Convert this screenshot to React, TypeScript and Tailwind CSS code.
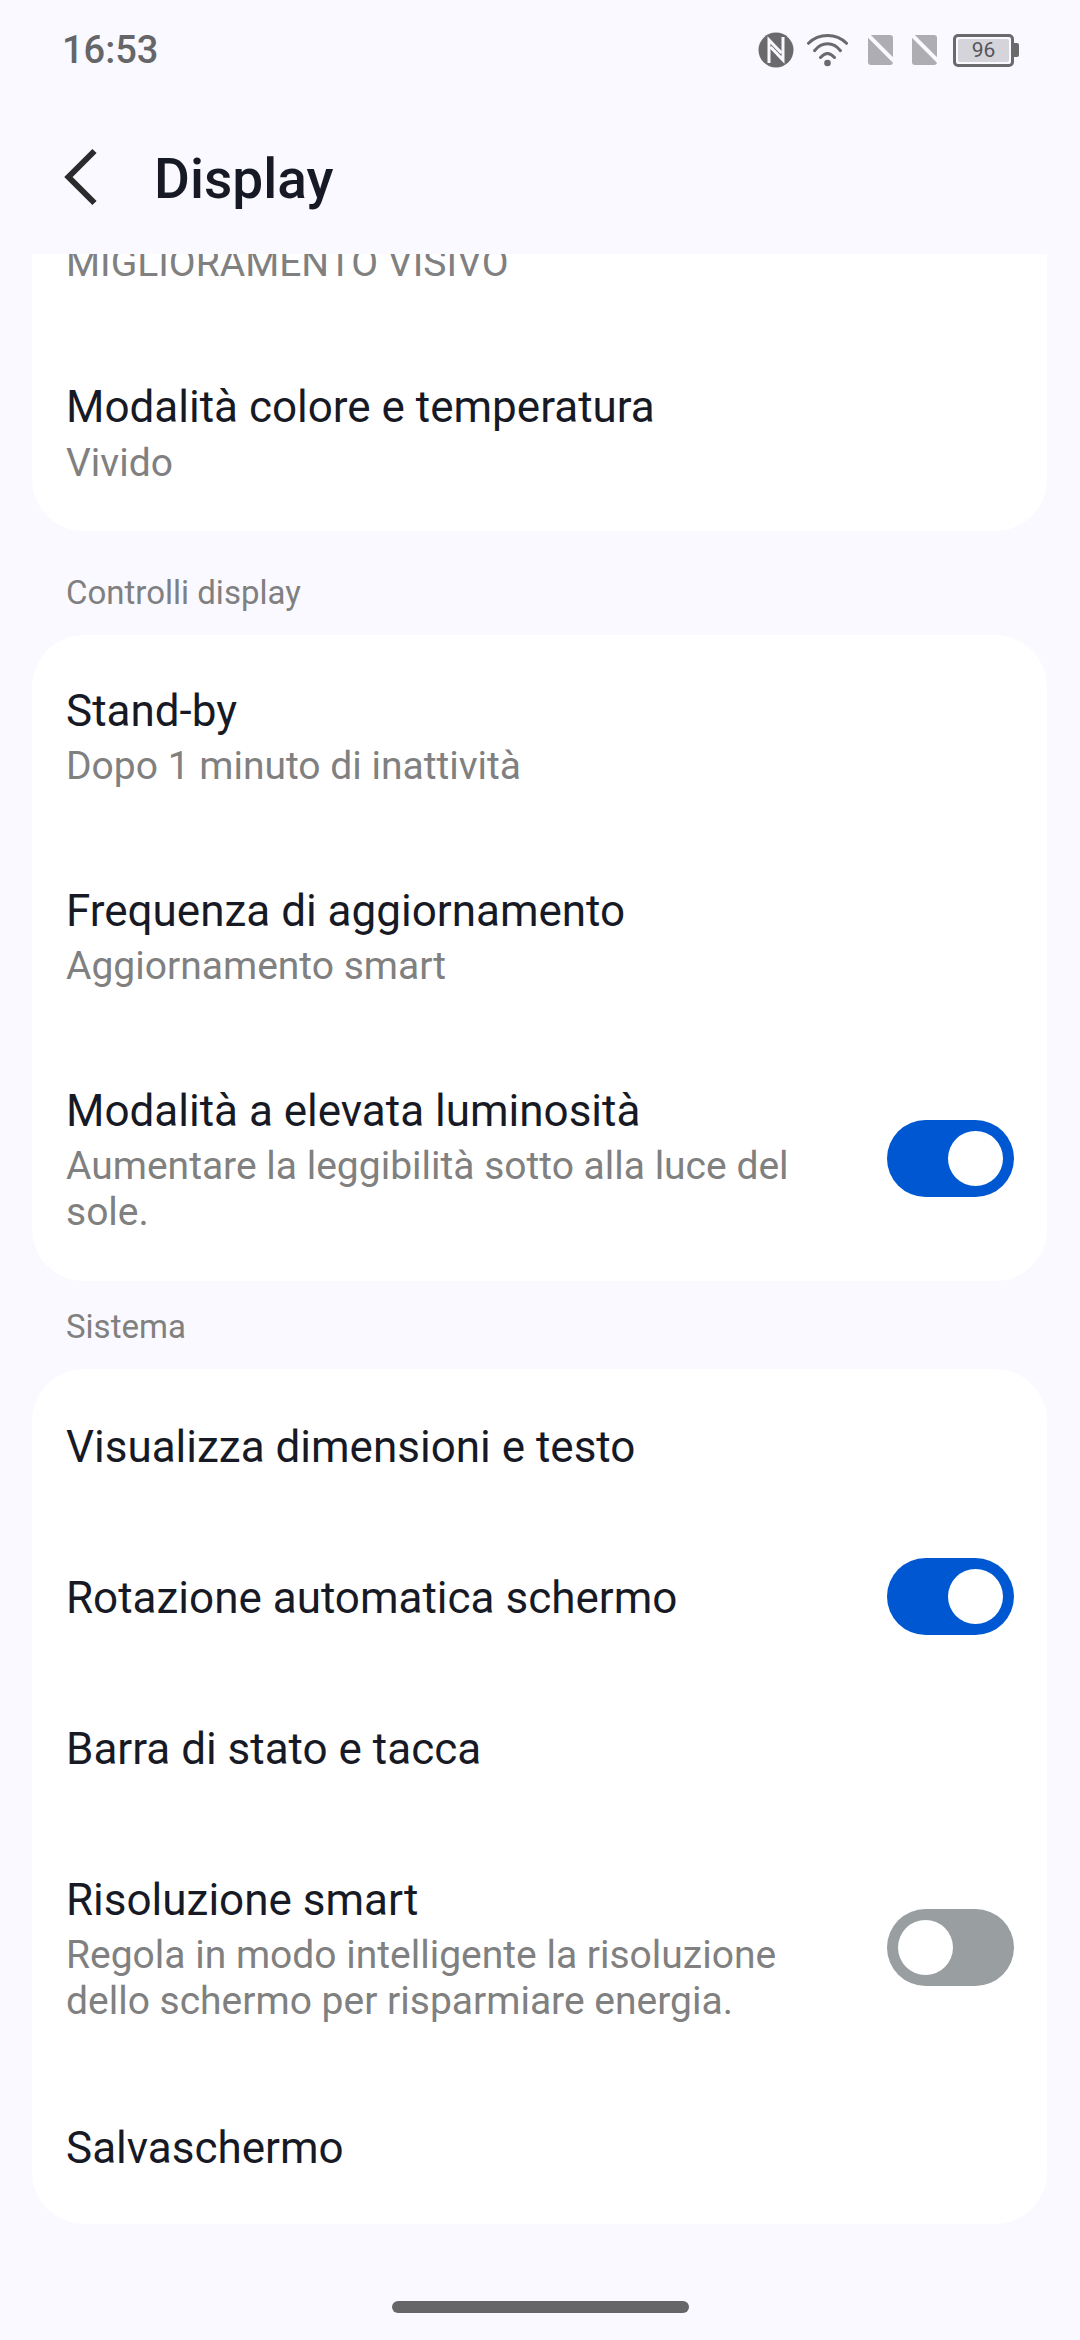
import React from "react";

const Toggle = ({ on, lift }: { on: boolean; lift?: boolean }) => (
  <div className={`flex h-0 shrink-0 items-center self-center ${lift ? "mb-[3px]" : ""}`}>
    <div className={`flex h-[77px] w-[127px] items-center rounded-full px-[11px] ${on ? "justify-end bg-[#0057d2]" : "justify-start bg-[#999ea1]"}`}>
      <div className="h-[55px] w-[55px] rounded-full bg-white" />
    </div>
  </div>
);

const Row = ({ title, sub, toggle, lift, pad }: { title: string; sub?: string; toggle?: boolean; lift?: boolean; pad: string }) => (
  <div className={`flex items-stretch justify-between pl-[34px] pr-[33px] ${pad}`}>
    <div className="w-[745px]">
      <div className="text-[44px] leading-[58px] text-[#171a25]">{title}</div>
      {sub && <div className="mt-[3px] text-[39px] leading-[46px] text-[#808080]">{sub}</div>}
    </div>
    {toggle !== undefined && <Toggle on={toggle} lift={lift} />}
  </div>
);

const Sim = () => (
  <svg width="32" height="32" viewBox="0 0 32 32">
    <path d="M1 1h22a3 3 0 0 1 3 3v24a3 3 0 0 1-3 3H4a3 3 0 0 1-3-3z" fill="#aeaeb2" />
    <path d="M-1 -1L31 31" stroke="#f9f9ff" strokeWidth="4" />
  </svg>
);

const StatusIcons = () => (
  <div className="flex items-center">
    <svg width="36" height="36" viewBox="0 0 36 36">
      <circle cx="18" cy="18" r="17.5" fill="#6a6a6d" />
      <path d="M11 31V8L23.5 21" fill="none" stroke="#f9f9ff" strokeWidth="3" />
      <path d="M25 5V28L12.5 15" fill="none" stroke="#f9f9ff" strokeWidth="3" />
    </svg>
    <svg width="41" height="34" viewBox="0 0 41 34" fill="none" stroke="#6a6a6d" strokeWidth="3" strokeLinecap="round" className="ml-[13px]">
      <path d="M1.5 10.3C12 0 29 0 39.5 10.3" />
      <path d="M7.5 17.7C15 8.5 26 8.5 33.5 17.7" />
      <path d="M13.5 24.5C18 19 23 19 27.5 24.5" />
      <circle cx="20.5" cy="30" r="3.3" fill="#6a6a6d" stroke="none" />
    </svg>
    <div className="ml-[19px]"><Sim /></div>
    <div className="ml-[12px]"><Sim /></div>
    <div className="ml-[10px] flex items-center">
      <div className="flex h-[33px] w-[61px] items-center justify-center rounded-[5px] border-[3px] border-[#6a6a6d] p-[2px]">
        <div className="flex h-full w-full items-center justify-center rounded-[2px] bg-[#d4d4da] text-[21px] leading-none text-[#55555a]">96</div>
      </div>
      <div className="h-[14px] w-[5px] rounded-r-[2px] bg-[#6a6a6d]" />
    </div>
  </div>
);

export default function App() {
  return (
    <div className="flex h-[2340px] w-[1080px] flex-col overflow-hidden bg-[#f9f9ff] font-['Roboto',sans-serif]">
      <div className="flex h-[100px] items-center justify-between pl-[62px] pr-[61px]">
        <span className="text-[38px] font-medium text-[#666669]">16:53</span>
        <StatusIcons />
      </div>
      <div className="flex h-[154px] items-start pt-[47px]">
        <svg width="40" height="60" viewBox="0 0 40 60" className="ml-[63px] mt-[1px]" fill="none" stroke="#2b2b2e" strokeWidth="6">
          <path d="M31.5 3L5.5 29l26 26" />
        </svg>
        <span className="ml-[51px] text-[55px] font-medium leading-[64px] text-[#171a25]">Display</span>
      </div>
      <div className="h-[1970px] overflow-hidden">
        <div className="-mt-[14px] ml-[32px] mr-[33px] flex h-[291px] flex-col rounded-b-[52px] bg-white">
          <div className="pl-[34px] text-[39px] leading-[46px] text-[#808080]">MIGLIORAMENTO VISIVO</div>
          <div className="mt-[92px] pl-[34px]">
            <div className="text-[44px] leading-[58px] text-[#171a25]">Modalità colore e temperatura</div>
            <div className="mt-[4px] text-[39px] leading-[46px] text-[#808080]">Vivido</div>
          </div>
        </div>
        <div className="flex h-[104px] items-end pb-[20px] pl-[66px] text-[33px] leading-[44px] text-[#808080]">Controlli display</div>
        <div className="ml-[32px] mr-[33px] rounded-[52px] bg-white">
          <Row pad="pt-[47px] pb-[46px]" title="Stand-by" sub="Dopo 1 minuto di inattività" />
          <Row pad="pt-[47px] pb-[46px]" title="Frequenza di aggiornamento" sub="Aggiornamento smart" />
          <Row pad="pt-[47px] pb-[46px]" title="Modalità a elevata luminosità" sub="Aumentare la leggibilità sotto alla luce del sole." toggle={true} />
        </div>
        <div className="flex h-[88px] items-end pb-[20px] pl-[66px] text-[33px] leading-[44px] text-[#808080]">Sistema</div>
        <div className="ml-[32px] mr-[33px] rounded-[52px] bg-white">
          <Row pad="pt-[49px] pb-[44px]" title="Visualizza dimensioni e testo" />
          <Row pad="pt-[49px] pb-[44px]" title="Rotazione automatica schermo" toggle={true} lift />
          <Row pad="pt-[49px] pb-[44px]" title="Barra di stato e tacca" />
          <Row pad="pt-[49px] pb-[46px]" title="Risoluzione smart" sub="Regola in modo intelligente la risoluzione dello schermo per risparmiare energia." toggle={false} />
          <Row pad="pt-[49px] pb-[47px]" title="Salvaschermo" />
        </div>
      </div>
      <div className="flex flex-1 items-start justify-center pt-[77px]">
        <div className="h-[12px] w-[297px] rounded-full bg-[#666668]" />
      </div>
    </div>
  );
}
